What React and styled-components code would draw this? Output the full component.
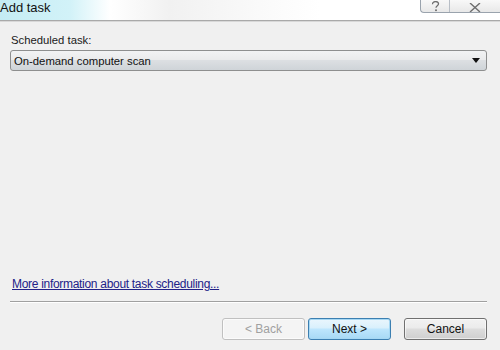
import styled, { createGlobalStyle } from "styled-components";

const GlobalStyle = createGlobalStyle`
  html, body {
    margin: 0;
    padding: 0;
    background: #f0f0f0;
  }
  body {
    font-family: "Liberation Sans", Arial, sans-serif;
  }
`;

const Window = styled.div`
  width: 500px;
  height: 350px;
  display: flex;
  flex-direction: column;
  background: #f0f0f0;
  overflow: hidden;
`;

const TitleBar = styled.div`
  height: 20px;
  display: flex;
  align-items: flex-start;
  background: linear-gradient(
    90deg,
    #c4ecf4 0px,
    #d2f2f8 70px,
    #ffffff 110px,
    #f1f1f1 170px,
    #fafafa 260px,
    #ffffff 320px
  );
  border-bottom: 1px solid #a9a9a9;
  box-shadow: 0 1px 0 #d8d8d8;
`;

const Title = styled.div`
  font-size: 13px;
  line-height: 16px;
  color: #111;
`;

const CaptionButtons = styled.div`
  margin-left: auto;
  display: flex;
  height: 12px;
  border: 1px solid #9aa3ad;
  border-top: none;
  border-right: none;
  border-bottom-left-radius: 4px;
  background: linear-gradient(#f8f8f8, #e8e8e8);
  overflow: hidden;
`;

const CaptionButton = styled.div`
  width: ${(p) => p.w}px;
  display: flex;
  align-items: flex-end;
  justify-content: center;
  & + & {
    border-left: 1px solid #b8bec6;
  }
`;

const Content = styled.div`
  flex: 1;
  display: flex;
  flex-direction: column;
  padding: 12px 13px 0 10px;
`;

const Label = styled.div`
  font-size: 11.3px;
  line-height: 15px;
  color: #1a1a1a;
  padding-left: 1px;
  margin-bottom: 2px;
`;

const Select = styled.div`
  height: 19px;
  display: flex;
  align-items: center;
  padding: 0 6px 0 3px;
  border: 1px solid #8e8f8f;
  border-radius: 3px;
  background: linear-gradient(#f2f3f4 0%, #eaebec 45%, #dcdfe2 50%, #cfd4d8 100%);
  font-size: 11.3px;
  color: #111;
`;

const SelectText = styled.span`
  flex: 1;
`;

const Spacer = styled.div`
  flex: 1;
`;

const Link = styled.a`
  font-size: 12px;
  line-height: 14px;
  color: #222288;
  text-decoration: underline;
  padding-left: 2px;
  margin-bottom: 10px;
  letter-spacing: -0.3px;
`;

const Separator = styled.div`
  margin: 0 13px 0 10px;
  height: 1px;
  background: #a0a0a0;
  border-bottom: 1px solid #ffffff;
`;

const Footer = styled.div`
  display: flex;
  justify-content: flex-end;
  padding: 15px 13px 10px 0;
`;

const Button = styled.button`
  width: 83px;
  height: 22px;
  margin-left: ${(p) => p.gap || 0}px;
  border-radius: 3px;
  font-family: "Liberation Sans", Arial, sans-serif;
  font-size: 12px;
  padding: 0;
  border: 1px solid ${(p) => (p.primary ? "#3c7fb1" : p.disabled ? "#c0c0c0" : "#707070")};
  color: ${(p) => (p.disabled ? "#a0a0a0" : "#111")};
  background: ${(p) =>
    p.disabled
      ? "#f4f4f4"
      : p.primary
      ? "linear-gradient(#eaf6fd 0%, #d9f0fc 45%, #bee6fd 50%, #a7d9f5 100%)"
      : "linear-gradient(#f2f2f2 0%, #ebebeb 45%, #dddddd 50%, #cfcfcf 100%)"};
  box-shadow: inset 0 0 0 1px ${(p) => (p.primary ? "#a6d8f4" : "rgba(255,255,255,0.6)")};
`;

const HelpIcon = () => (
  <svg width="9" height="11" viewBox="0 0 9 11">
    <path
      d="M1.5 3.2 C1.5 1.4 3 0.6 4.5 0.6 C6.2 0.6 7.5 1.6 7.5 3 C7.5 4.6 5 4.9 5 6.8"
      fill="none"
      stroke="#6e6e6e"
      strokeWidth="1.3"
    />
    <circle cx="5" cy="9.3" r="1" fill="#6e6e6e" />
  </svg>
);

const CloseIcon = () => (
  <svg width="12" height="9" viewBox="0 0 12 9">
    <path d="M1 0 L11 9 M11 0 L1 9" stroke="#6e6e6e" strokeWidth="1.4" />
  </svg>
);

const Arrow = () => (
  <svg width="8" height="5" viewBox="0 0 8 5">
    <path d="M0 0 H8 L4 5 Z" fill="#111" />
  </svg>
);

export default function App() {
  return (
    <>
      <GlobalStyle />
      <Window>
        <TitleBar>
          <Title>Add task</Title>
          <CaptionButtons>
            <CaptionButton w={28}>
              <HelpIcon />
            </CaptionButton>
            <CaptionButton w={50}>
              <CloseIcon />
            </CaptionButton>
          </CaptionButtons>
        </TitleBar>
        <Content>
          <Label>Scheduled task:</Label>
          <Select>
            <SelectText>On-demand computer scan</SelectText>
            <Arrow />
          </Select>
          <Spacer />
          <Link href="#">More information about task scheduling...</Link>
        </Content>
        <Separator />
        <Footer>
          <Button disabled>&lt; Back</Button>
          <Button primary gap={3}>
            Next &gt;
          </Button>
          <Button gap={13}>Cancel</Button>
        </Footer>
      </Window>
    </>
  );
}
